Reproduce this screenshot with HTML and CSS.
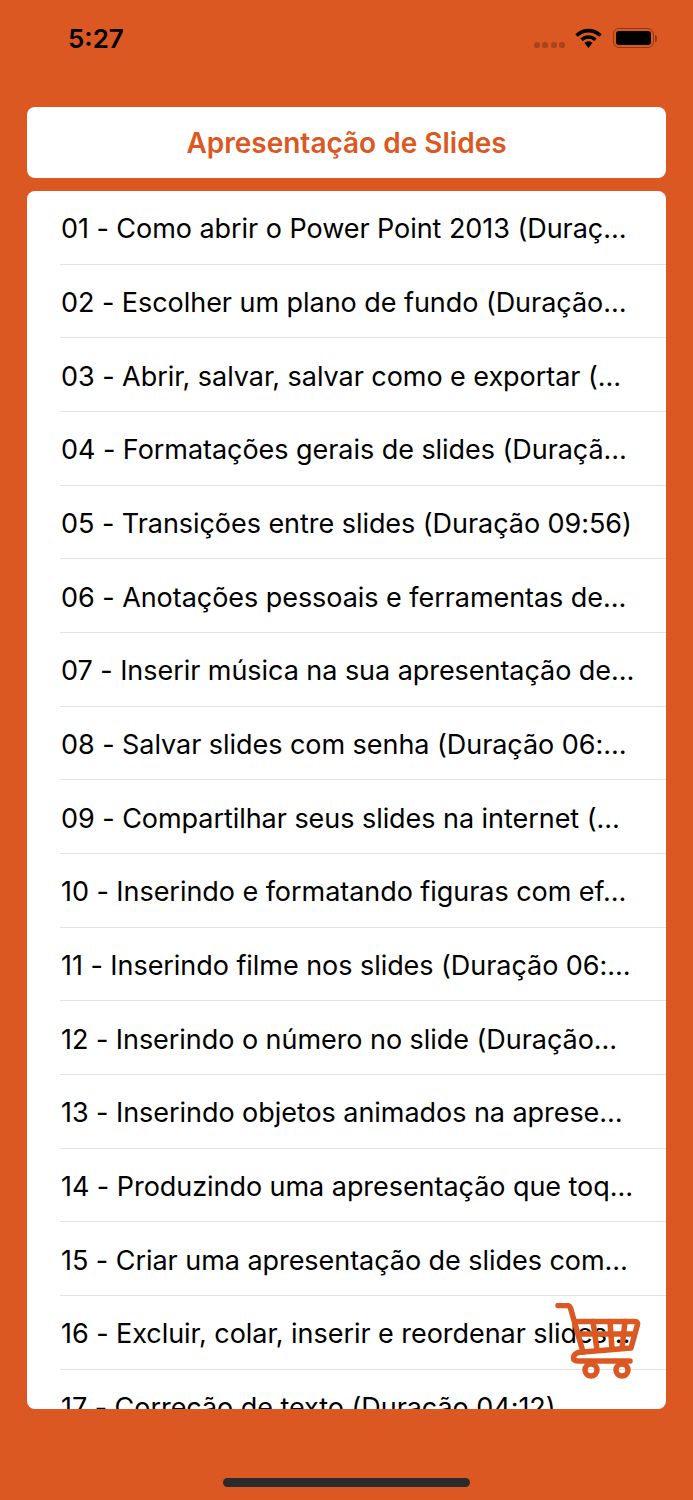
FILE: index.html
```html
<!DOCTYPE html>
<html>
<head>
  <meta charset="UTF-8">
  <meta name="viewport" content="width=device-width, initial-scale=1.0">
  <title>Apresentação de Slides</title>
  <link rel="stylesheet" href="styles.css">
</head>
<body>
  <div class="status">
    <span class="time">5:27</span>
    <div class="status-icons">
      <div class="signal"><i></i><i></i><i></i><i></i></div>
      <svg class="wifi" width="27" height="20" viewBox="0 0 27 20">
        <path d="M1.500 7.500C9 1 18 1 25.500 7.500" fill="none" stroke="#000" stroke-width="3.600"/>
        <path d="M6.500 11.800C10.500 8 16.500 8 20.500 11.800" fill="none" stroke="#000" stroke-width="3.600"/>
        <path d="M9.500 15L13.500 20L17.500 15C15 12.800 12 12.800 9.500 15Z" fill="#000"/>
      </svg>
      <div class="battery"><div class="battery-fill"></div></div>
      <div class="battery-tip"></div>
    </div>
  </div>

  <div class="title-card">Apresentação de Slides</div>

  <ul class="list">
    <li>01 - Como abrir o Power Point 2013 (Duraç…</li>
    <li>02 - Escolher um plano de fundo (Duração…</li>
    <li>03 - Abrir, salvar, salvar como e exportar (…</li>
    <li>04 - Formatações gerais de slides (Duraçã…</li>
    <li>05 - Transições entre slides (Duração 09:56)</li>
    <li>06 - Anotações pessoais e ferramentas de…</li>
    <li>07 - Inserir música na sua apresentação de…</li>
    <li>08 - Salvar slides com senha (Duração 06:…</li>
    <li>09 - Compartilhar seus slides na internet (…</li>
    <li>10 - Inserindo e formatando figuras com ef…</li>
    <li>11 - Inserindo filme nos slides (Duração 06:…</li>
    <li>12 - Inserindo o número no slide (Duração…</li>
    <li>13 - Inserindo objetos animados na aprese…</li>
    <li>14 - Produzindo uma apresentação que toq…</li>
    <li>15 - Criar uma apresentação de slides com…</li>
    <li>16 - Excluir, colar, inserir e reordenar slides…</li>
    <li>17 - Correção de texto (Duração 04:12)</li>
  </ul>

  <svg class="cart" width="86" height="76" viewBox="0 0 86 76" fill="none" stroke="#dc5823" stroke-width="5.500" stroke-linecap="round" stroke-linejoin="round">
    <path d="M3 2.500H12C14 2.500 15 3.500 15.500 5L28 49"/>
    <path d="M22 18.500H80C82 18.500 83 20 82.500 21.500L76 45L28 49"/>
    <path d="M38 18.500L42 47M55 18.500L57 46M70 18.500L67 45M24 31H79"/>
    <path d="M28 49C21 49 18.500 52 18.500 55C18.500 57.500 21 58 24 58H75"/>
    <circle cx="36" cy="67" r="6"/>
    <circle cx="67" cy="67" r="6"/>
  </svg>

  <div class="home-bar"></div>
</body>
</html>
```

FILE: styles.css
```css
html, body {
  margin: 0;
  padding: 0;
}

body {
  position: relative;
  width: 693px;
  height: 1500px;
  overflow: hidden;
  background-color: #dc5823;
  font-family: Inter, "Liberation Sans", sans-serif;
}

.status {
  display: flex;
  justify-content: space-between;
  align-items: center;
  height: 76px;
  padding: 0 36px 0 68px;
  box-sizing: border-box;
}

.time {
  font-size: 26px;
  font-weight: 600;
  color: #000;
}

.status-icons {
  display: flex;
  align-items: center;
}

.signal {
  display: flex;
  gap: 2.500px;
  margin: 13px 10px 0 0;
}

.signal i {
  width: 6px;
  height: 6px;
  border-radius: 2.500px;
  background: #a8441b;
}

.wifi {
  margin-right: 11px;
}

.battery {
  width: 41px;
  height: 20px;
  box-sizing: border-box;
  border: 1.500px solid #8f3a17;
  border-radius: 6px;
  padding: 2px;
}

.battery-fill {
  height: 100%;
  background: #000;
  border-radius: 3px;
}

.battery-tip {
  width: 2px;
  height: 7px;
  margin-left: 1px;
  background: #8f3a17;
  border-radius: 0 2px 2px 0;
}

.title-card {
  margin: 31px 27px 0;
  height: 71px;
  display: flex;
  align-items: center;
  justify-content: center;
  background: #fff;
  border-radius: 8px;
  color: #dc5823;
  font-size: 28px;
  font-weight: 600;
}

.list {
  list-style: none;
  margin: 13px 27px 0;
  padding: 0;
  height: 1218px;
  overflow: hidden;
  background: #fff;
  border-radius: 8px;
}

.list li {
  height: 73.67px;
  box-sizing: border-box;
  margin-left: 33px;
  padding: 3px 0 0 1px;
  display: flex;
  align-items: center;
  border-bottom: 1px solid #e2e2e4;
  font-size: 27px;
  letter-spacing: -0.05px;
  color: #000;
  white-space: nowrap;
}

.cart {
  position: absolute;
  left: 555px;
  top: 1303px;
}

.home-bar {
  position: absolute;
  left: 223px;
  top: 1478px;
  width: 247px;
  height: 9px;
  border-radius: 5px;
  background: #2b2b2d;
}
```
